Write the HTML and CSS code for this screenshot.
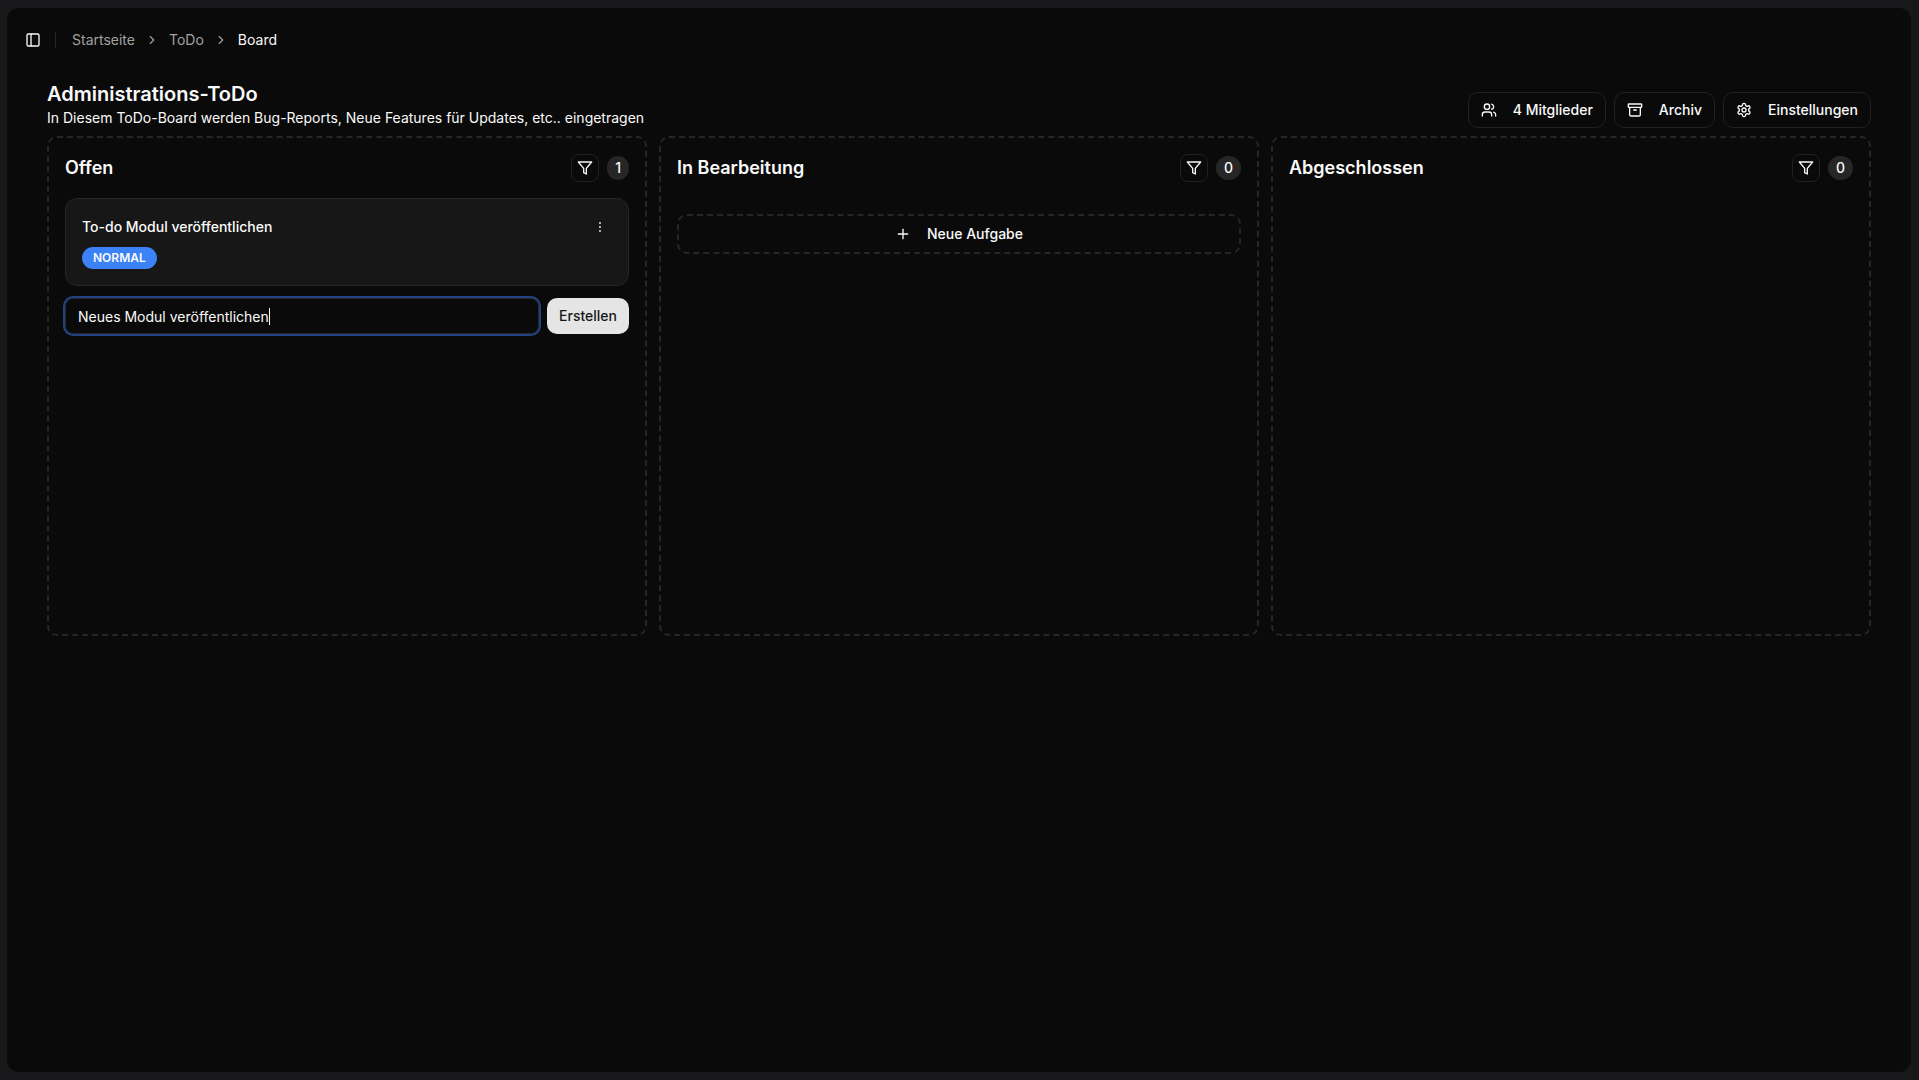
FILE: index.html
```html
<!DOCTYPE html>
<html lang="de">
    <head>
        <meta charset="UTF-8">
        <meta name="viewport" content="width=device-width, initial-scale=1.0">
        <title>Administrations-ToDo</title>
        <link rel="stylesheet" href="styles.css">
    </head>
    <body>
        <div class="page">

            <!-- Topbar -->
            <header class="topbar">
                <button type="button" class="icon-button" aria-label="Seitenleiste umschalten">
                    <svg class="icon" viewBox="0 0 24 24"><rect width="18" height="18" x="3" y="3" rx="2"/><path d="M9 3v18"/></svg>
                </button>
                <div class="separator"></div>
                <nav class="breadcrumb" aria-label="Breadcrumb">
                    <a href="#">Startseite</a>
                    <svg class="icon icon-small" viewBox="0 0 24 24"><path d="m9 18 6-6-6-6"/></svg>
                    <a href="#">ToDo</a>
                    <svg class="icon icon-small" viewBox="0 0 24 24"><path d="m9 18 6-6-6-6"/></svg>
                    <span class="current">Board</span>
                </nav>
            </header>

            <main>
                <!-- Board Header -->
                <div class="board-header">
                    <div>
                        <h1>Administrations-ToDo</h1>
                        <p>In Diesem ToDo-Board werden Bug-Reports, Neue Features für Updates, etc.. eingetragen</p>
                    </div>
                    <div class="actions">
                        <button type="button" class="button">
                            <svg class="icon" viewBox="0 0 24 24"><path d="M16 21v-2a4 4 0 0 0-4-4H6a4 4 0 0 0-4 4v2"/><circle cx="9" cy="7" r="4"/><path d="M22 21v-2a4 4 0 0 0-3-3.87"/><path d="M16 3.13a4 4 0 0 1 0 7.75"/></svg>
                            4 Mitglieder
                        </button>
                        <button type="button" class="button">
                            <svg class="icon" viewBox="0 0 24 24"><rect width="20" height="5" x="2" y="3" rx="1"/><path d="M4 8v11a2 2 0 0 0 2 2h12a2 2 0 0 0 2-2V8"/><path d="M10 12h4"/></svg>
                            Archiv
                        </button>
                        <button type="button" class="button">
                            <svg class="icon" viewBox="0 0 24 24"><path d="M12.22 2h-.44a2 2 0 0 0-2 2v.18a2 2 0 0 1-1 1.73l-.43.25a2 2 0 0 1-2 0l-.15-.08a2 2 0 0 0-2.73.73l-.22.38a2 2 0 0 0 .73 2.73l.15.1a2 2 0 0 1 1 1.72v.51a2 2 0 0 1-1 1.74l-.15.09a2 2 0 0 0-.73 2.73l.22.38a2 2 0 0 0 2.73.73l.15-.08a2 2 0 0 1 2 0l.43.25a2 2 0 0 1 1 1.73V20a2 2 0 0 0 2 2h.44a2 2 0 0 0 2-2v-.18a2 2 0 0 1 1-1.73l.43-.25a2 2 0 0 1 2 0l.15.08a2 2 0 0 0 2.73-.73l.22-.39a2 2 0 0 0-.73-2.73l-.15-.08a2 2 0 0 1-1-1.74v-.5a2 2 0 0 1 1-1.74l.15-.09a2 2 0 0 0 .73-2.73l-.22-.38a2 2 0 0 0-2.73-.73l-.15.08a2 2 0 0 1-2 0l-.43-.25a2 2 0 0 1-1-1.73V4a2 2 0 0 0-2-2z"/><circle cx="12" cy="12" r="3"/></svg>
                            Einstellungen
                        </button>
                    </div>
                </div>

                <!-- Board -->
                <div class="board">
                    <section class="column">
                        <div class="column-header">
                            <h2>Offen</h2>
                            <button type="button" class="icon-button outlined" aria-label="Filter">
                                <svg class="icon" viewBox="0 0 24 24"><path d="M22 3H2l8 9.46V19l4 2v-8.54L22 3z"/></svg>
                            </button>
                            <span class="count">1</span>
                        </div>
                        <article class="card">
                            <div class="card-header">
                                <h3>To-do Modul veröffentlichen</h3>
                                <button type="button" class="menu-button" aria-label="Menü">
                                    <svg class="dots" viewBox="0 0 15 15"><circle cx="7.5" cy="2.5" r="1.125"/><circle cx="7.5" cy="7.5" r="1.125"/><circle cx="7.5" cy="12.5" r="1.125"/></svg>
                                </button>
                            </div>
                            <span class="priority">NORMAL</span>
                        </article>
                        <form class="new-task">
                            <div class="task-field">
                                <input type="text" aria-label="Neue Aufgabe" value="Neues Modul veröffentlichen">
                                <span class="caret" aria-hidden="true"></span>
                            </div>
                            <button type="button" class="button primary">Erstellen</button>
                        </form>
                    </section>

                    <section class="column">
                        <div class="column-header">
                            <h2>In Bearbeitung</h2>
                            <button type="button" class="icon-button outlined" aria-label="Filter">
                                <svg class="icon" viewBox="0 0 24 24"><path d="M22 3H2l8 9.46V19l4 2v-8.54L22 3z"/></svg>
                            </button>
                            <span class="count">0</span>
                        </div>
                        <button type="button" class="button add-task">
                            <svg class="icon" viewBox="0 0 24 24"><path d="M5 12h14"/><path d="M12 5v14"/></svg>
                            Neue Aufgabe
                        </button>
                    </section>

                    <section class="column">
                        <div class="column-header">
                            <h2>Abgeschlossen</h2>
                            <button type="button" class="icon-button outlined" aria-label="Filter">
                                <svg class="icon" viewBox="0 0 24 24"><path d="M22 3H2l8 9.46V19l4 2v-8.54L22 3z"/></svg>
                            </button>
                            <span class="count">0</span>
                        </div>
                    </section>
                </div>
            </main>
        </div>

        <script>
            const taskInput = document.querySelector('.new-task input');
            const caret = document.querySelector('.caret');

            // Eigener Cursor hinter dem eingegebenen Text
            function updateCaret() {
                const context = document.createElement('canvas').getContext('2d');
                context.font = getComputedStyle(taskInput).font;
                const width = Math.round(context.measureText(taskInput.value).width);
                caret.style.left = (13 + width) + 'px';
            }

            taskInput.addEventListener('input', updateCaret);
            taskInput.focus();
            updateCaret();
        </script>
    </body>
</html>
```
FILE: styles.css
```css
* {
    box-sizing: border-box;
    margin: 0;
}
body {
    display: flex;
    min-height: 100vh;
    padding: 8px 8px 8px 7px;
    background-color: #18181b;
    color: #fafafa;
    font-family: Inter, "Liberation Sans", sans-serif;
    font-size: 14px;
    line-height: 20px;
}
button,
input {
    font: inherit;
    color: inherit;
}
button {
    cursor: pointer;
}
.page {
    flex: 1;
    background-color: #0a0a0a;
    border-radius: 12px;
}
.icon {
    flex-shrink: 0;
    width: 16px;
    height: 16px;
    fill: none;
    stroke: currentColor;
    stroke-width: 2;
    stroke-linecap: round;
    stroke-linejoin: round;
}
.icon-small {
    width: 14px;
    height: 14px;
}

/* Topbar */
.topbar {
    display: flex;
    align-items: center;
    height: 64px;
    padding: 0 12px;
}
.icon-button {
    display: flex;
    align-items: center;
    justify-content: center;
    width: 28px;
    height: 28px;
    padding: 0;
    background: none;
    border: none;
    border-radius: 8px;
}
.icon-button.outlined {
    border: 1px solid #212121;
}
.separator {
    width: 1px;
    height: 16px;
    margin: 0 16px 0 8px;
    background-color: #262626;
}
.breadcrumb {
    display: flex;
    align-items: center;
    gap: 10px;
    color: #a1a1a1;
}
.breadcrumb a {
    color: inherit;
    text-decoration: none;
}
.breadcrumb .current {
    color: #fafafa;
}

/* Board Header */
main {
    padding: 8px 40px;
}
.board-header {
    display: flex;
    align-items: flex-end;
    justify-content: space-between;
    margin-bottom: 8px;
}
h1 {
    font-size: 20px;
    font-weight: 600;
    line-height: 28px;
}
.actions {
    display: flex;
    gap: 8px;
}
.button {
    display: flex;
    align-items: center;
    justify-content: center;
    gap: 16px;
    height: 36px;
    padding: 0 12px;
    background: none;
    border: 1px solid #212121;
    border-radius: 10px;
    font-weight: 500;
}
.button.primary {
    border: none;
    background-color: #e5e5e5;
    color: #171717;
}

/* Spalten */
.board {
    display: grid;
    grid-template-columns: repeat(3, 1fr);
    gap: 12px;
}
.column {
    min-height: 500px;
    padding: 16px;
    border: 2px dashed #262626;
    border-radius: 10px;
}
.column-header {
    display: flex;
    align-items: center;
    gap: 8px;
    margin-bottom: 16px;
}
h2 {
    flex: 1;
    font-size: 18px;
    font-weight: 600;
    line-height: 28px;
}
.count {
    padding: 2px 8px;
    background-color: #262626;
    border-radius: 12px;
    font-weight: 500;
}

/* Karten */
.card {
    display: flex;
    flex-direction: column;
    align-items: flex-start;
    gap: 8px;
    padding: 16px;
    background-color: #171717;
    border: 1px solid #262626;
    border-radius: 12px;
}
.card-header {
    display: flex;
    align-items: center;
    justify-content: space-between;
    width: 100%;
}
h3 {
    font-size: 14px;
    font-weight: 500;
}
.menu-button {
    display: flex;
    align-items: center;
    justify-content: center;
    width: 24px;
    height: 24px;
    padding: 0;
    background: none;
    border: none;
}
.dots {
    width: 12px;
    height: 12px;
    fill: currentColor;
}
.priority {
    padding: 3px 11px;
    background-color: #3b82f6;
    border-radius: 11px;
    font-size: 12px;
    font-weight: 600;
    line-height: 16px;
}

/* Neue Aufgabe */
.new-task {
    display: flex;
    gap: 8px;
    margin-top: 12px;
}
.task-field {
    position: relative;
    flex: 1;
}
.task-field input {
    display: block;
    width: 100%;
    height: 36px;
    padding: 0 12px;
    background-color: #0a0a0a;
    border: 1px solid #262626;
    border-radius: 8px;
    outline: none;
    caret-color: transparent;
}
.task-field input:focus {
    box-shadow: 0 0 0 2px #204280;
}
.caret {
    display: none;
    position: absolute;
    top: 10px;
    width: 1px;
    height: 17px;
    background-color: #fafafa;
}
.task-field input:focus + .caret {
    display: block;
}
.add-task {
    width: 100%;
    height: 40px;
    margin-top: 32px;
    border: 2px dashed #262626;
}
```
